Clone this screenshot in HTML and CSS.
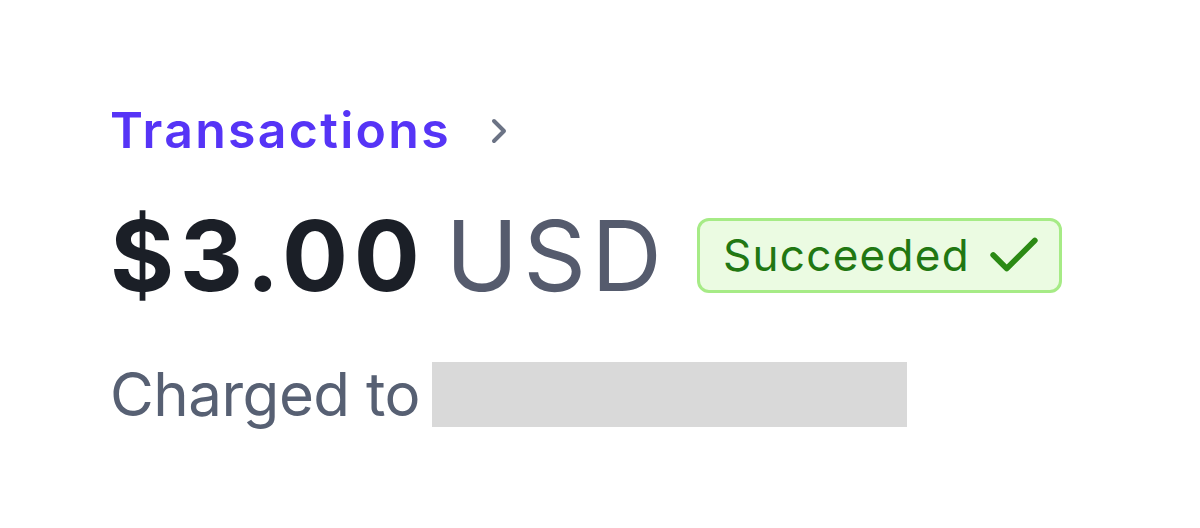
FILE: index.html
```html
<!DOCTYPE html>
<html>
<head>
<meta charset="utf-8">
<link rel="stylesheet" href="styles.css">
</head>
<body>
<main class="card">
  <div class="crumb">
    <span class="crumb-link">Transactions</span>
    <svg class="chev" viewBox="0 0 24 36" width="24" height="36" aria-hidden="true">
      <path d="M7 8 L17 18 L7 28" fill="none" stroke="#6b7385" stroke-width="4" stroke-linecap="round" stroke-linejoin="round"/>
    </svg>
  </div>
  <div class="amount-row">
    <span class="amount">$3.00</span>
    <span class="currency">USD</span>
    <span class="badge">Succeeded
      <svg class="check" viewBox="0 0 50 40" width="52" height="42" aria-hidden="true">
        <path d="M5 20 L18 33 L45 6" fill="none" stroke="#2b8a14" stroke-width="5.5" stroke-linecap="round" stroke-linejoin="round"/>
      </svg>
    </span>
  </div>
  <div class="charged">
    <span class="charged-label">Charged to</span>
    <span class="redacted"></span>
  </div>
</main>
</body>
</html>
```
FILE: styles.css
```css
html, body {
  margin: 0;
  padding: 0;
  background: #ffffff;
}
body {
  font-family: Inter, "Noto Sans", sans-serif;
}
.card {
  padding: 100px 0 0 110px;
  display: flex;
  flex-direction: column;
}
.crumb {
  display: flex;
  align-items: center;
  gap: 36px;
  height: 60px;
}
.crumb-link {
  font-size: 50px;
  font-weight: 600;
  color: #5634f6;
  letter-spacing: 2.3px;
}
.chev {
  display: block;
  margin-top: 2px;
}
.amount-row {
  display: flex;
  align-items: center;
  margin-top: 35px;
  height: 120px;
}
.amount {
  font-size: 98px;
  font-weight: 700;
  color: #1b1f27;
  letter-spacing: 5.6px;
}
.currency {
  font-size: 98px;
  font-weight: 400;
  color: #555b6d;
  margin-left: 20px;
  letter-spacing: 5px;
}
.badge {
  margin-left: 30px;
  display: flex;
  align-items: center;
  gap: 18px;
  height: 75px;
  box-sizing: border-box;
  padding: 0 19px 0 23px;
  background: #ebfbe2;
  border: 3px solid #a6eb86;
  border-radius: 12px;
  font-size: 44px;
  color: #217712;
  letter-spacing: 1.3px;
}
.check {
  display: block;
}
.charged {
  display: flex;
  align-items: center;
  gap: 12px;
  margin-top: 43px;
}
.charged-label {
  font-size: 60px;
  color: #576073;
  letter-spacing: -0.5px;
}
.redacted {
  display: block;
  width: 475px;
  height: 65px;
  background: #d9d9d9;
}
```
